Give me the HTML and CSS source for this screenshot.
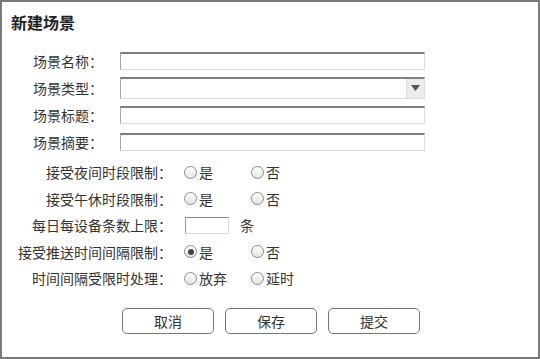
FILE: index.html
```html
<!DOCTYPE html>
<html lang="zh-CN">
<head>
	<meta charset="UTF-8">
	<title>新建场景</title>
	<link rel="stylesheet" href="styles.css">
</head>
<body>
	<div class="panel">
		<h1 class="title">新建场景</h1>
		<div class="fields">
			<div class="row">
				<span class="label">场景名称：</span>
				<input class="text" type="text">
			</div>
			<div class="row">
				<span class="label">场景类型：</span>
				<div class="select">
					<span class="arrow">
						<svg width="9" height="6" viewBox="0 0 9 6"><path d="M0 0H9L4.5 6Z" fill="#555"/></svg>
					</span>
				</div>
			</div>
			<div class="row">
				<span class="label">场景标题：</span>
				<input class="text" type="text">
			</div>
			<div class="row">
				<span class="label">场景摘要：</span>
				<input class="text" type="text">
			</div>
		</div>
		<div class="options">
			<div class="row2">
				<span class="label2">接受夜间时段限制：</span>
				<span class="opt"><span class="radio"></span>是</span>
				<span class="opt"><span class="radio"></span>否</span>
			</div>
			<div class="row2">
				<span class="label2">接受午休时段限制：</span>
				<span class="opt"><span class="radio"></span>是</span>
				<span class="opt"><span class="radio"></span>否</span>
			</div>
			<div class="row2">
				<span class="label2">每日每设备条数上限：</span>
				<input class="num" type="text">
				<span class="unit">条</span>
			</div>
			<div class="row2">
				<span class="label2">接受推送时间间隔限制：</span>
				<span class="opt"><span class="radio checked"></span>是</span>
				<span class="opt"><span class="radio"></span>否</span>
			</div>
			<div class="row2">
				<span class="label2">时间间隔受限时处理：</span>
				<span class="opt"><span class="radio"></span>放弃</span>
				<span class="opt"><span class="radio"></span>延时</span>
			</div>
		</div>
		<div class="buttons">
			<button class="btn">取消</button>
			<button class="btn">保存</button>
			<button class="btn">提交</button>
		</div>
	</div>
</body>
</html>
```

FILE: styles.css
```css
*{
	margin: 0;
	padding: 0;
	box-sizing: border-box;
}
body{
	font-family: "Noto Sans CJK SC", "Liberation Sans", sans-serif;
	font-size: 14px;
	color: #333;
	background: #fff;
}
.panel{
	width: 540px;
	height: 359px;
	border: 2px solid #7a7a7a;
	overflow: hidden;
}
.title{
	font-size: 16px;
	line-height: 20px;
	font-weight: bold;
	color: #222;
	padding: 10px 0 0 9px;
}
.fields{
	margin-top: 15px;
}
.row{
	display: flex;
	align-items: center;
	height: 27px;
}
.label{
	width: 101px;
	text-align: right;
	line-height: 18px;
}
.text{
	margin-left: 17px;
	width: 305px;
	height: 18px;
	border: 1px solid #ddd;
	border-top: 2px solid #808080;
	border-left: 1px solid #a8a8a8;
	background: #fff;
	outline: none;
}
.select{
	margin-left: 17px;
	width: 305px;
	height: 22px;
	border: 1px solid #ddd;
	border-top: 2px solid #808080;
	border-left: 1px solid #a8a8a8;
	display: flex;
	justify-content: flex-end;
}
.arrow{
	width: 18px;
	height: 19px;
	background: #ececec;
	border-left: 1px solid #ddd;
	display: flex;
	align-items: center;
	justify-content: center;
}
.options{
	margin-top: 4px;
}
.row2{
	display: flex;
	align-items: center;
	height: 26.5px;
}
.label2{
	width: 170px;
	text-align: right;
	line-height: 18px;
	margin-right: 12px;
}
.opt{
	display: flex;
	align-items: center;
	width: 67px;
	line-height: 18px;
}
.radio{
	width: 13px;
	height: 13px;
	border: 1px solid #8a8a8a;
	border-radius: 50%;
	background: linear-gradient(#fff, #e4e4e4);
	margin-right: 2px;
	position: relative;
}
.radio.checked::after{
	content: "";
	position: absolute;
	left: 2.5px;
	top: 2.5px;
	width: 6px;
	height: 6px;
	border-radius: 50%;
	background: #444;
}
.num{
	margin-left: 1px;
	width: 44px;
	height: 17px;
	border: 1px solid #ddd;
	border-top: 1px solid #888;
	border-left: 1px solid #999;
	outline: none;
}
.unit{
	margin-left: 11px;
	line-height: 18px;
}
.buttons{
	margin-top: 16px;
	display: flex;
	justify-content: center;
	gap: 11px;
	padding-left: 2px;
}
.btn{
	width: 92px;
	height: 26px;
	border: 1px solid #777;
	border-radius: 5px;
	background: #fff;
	font-family: inherit;
	font-size: 14px;
	color: #333;
}
```
